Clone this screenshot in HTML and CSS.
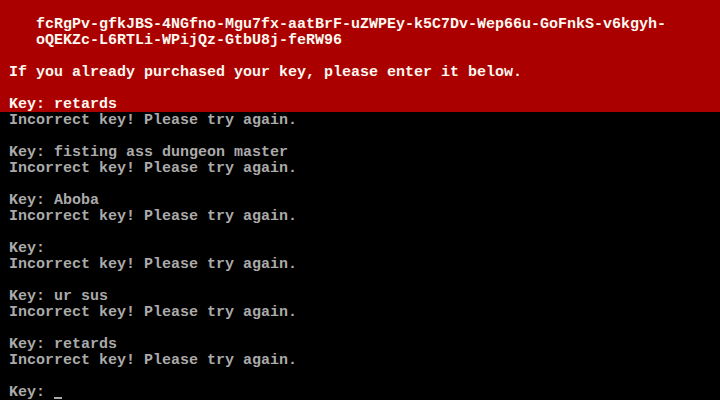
FILE: index.html
```html
<!DOCTYPE html>
<html lang="en">
<head>
    <meta charset="UTF-8">
    <meta name="viewport" content="width=device-width, initial-scale=1.0">
    <title>Key Prompt</title>
    <link rel="stylesheet" href="styles.css">
</head>
<body>
    <main class="console">
        <section class="banner">
            <div class="line"></div>
            <div class="line">   fcRgPv-gfkJBS-4NGfno-Mgu7fx-aatBrF-uZWPEy-k5C7Dv-Wep66u-GoFnkS-v6kgyh-</div>
            <div class="line">   oQEKZc-L6RTLi-WPijQz-GtbU8j-feRW96</div>
            <div class="line"></div>
            <div class="line">If you already purchased your key, please enter it below.</div>
            <div class="line"></div>
            <div class="line">Key: retards</div>
        </section>

        <section class="log">
            <div class="line">Incorrect key! Please try again.</div>
            <div class="line"></div>
            <div class="line">Key: fisting ass dungeon master</div>
            <div class="line">Incorrect key! Please try again.</div>
            <div class="line"></div>
            <div class="line">Key: Aboba</div>
            <div class="line">Incorrect key! Please try again.</div>
            <div class="line"></div>
            <div class="line">Key:</div>
            <div class="line">Incorrect key! Please try again.</div>
            <div class="line"></div>
            <div class="line">Key: ur sus</div>
            <div class="line">Incorrect key! Please try again.</div>
            <div class="line"></div>
            <div class="line">Key: retards</div>
            <div class="line">Incorrect key! Please try again.</div>
            <div class="line"></div>
            <div class="line">Key: <span class="cursor"></span></div>
        </section>
    </main>
</body>
</html>
```

FILE: styles.css
```css
* {
    margin: 0;
    padding: 0;
    box-sizing: border-box;
}

body {
    background: #000;
    font-family: "Liberation Mono", "DejaVu Sans Mono", monospace;
    font-size: 15px;
    font-weight: bold;
}

.console {
    width: 720px;
    height: 400px;
    overflow: hidden;
    display: flex;
    flex-direction: column;
}

.banner {
    background: #aa0000;
    color: #fff8f0;
}

.log {
    background: #000;
    color: #aaaaaa;
}

.line {
    height: 16px;
    padding: 2px 0 0 9px;
    line-height: 14px;
    white-space: pre;
}

.cursor {
    display: inline-block;
    width: 8px;
    height: 13px;
    vertical-align: top;
    border-bottom: 2px solid #aaaaaa;
}
```
